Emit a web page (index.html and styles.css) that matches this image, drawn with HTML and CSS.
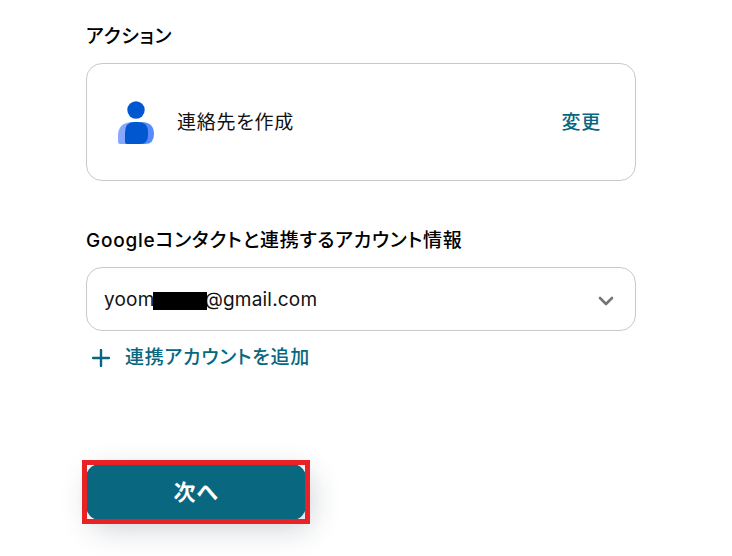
FILE: index.html
```html
<!DOCTYPE html>
<html lang="ja">
<head>
<meta charset="utf-8">
<meta name="viewport" content="width=device-width, initial-scale=1">
<title>アクション</title>
<link rel="stylesheet" href="styles.css">
</head>
<body>
<main class="form">
  <section class="group">
    <h2 class="label">アクション</h2>
    <div class="card">
      <svg class="card-icon" viewBox="0 0 38 44" aria-hidden="true">
        <circle cx="19" cy="9" r="8.7" fill="#0057d0"/>
        <path d="M16 21h6v22H3Q1 43 1 41V35Q1 21 16 21z" fill="#86a9ff"/>
        <path d="M16 21h8q13 0 13 12q0 10-9 10H16z" fill="#578cff"/>
        <path d="M17 21h4q10 0 10 10v3q0 9-8 9H10q-2 0-2-2V32q0-11 9-11z" fill="#0057d0"/>
      </svg>
      <span class="card-name">連絡先を作成</span>
      <button class="link" type="button">変更</button>
    </div>
  </section>
  <section class="group">
    <label class="label" for="account">Googleコンタクトと連携するアカウント情報</label>
    <div class="select-box">
      <select class="select" id="account">
        <option>yoom&emsp;&emsp;&ensp;&hairsp;@gmail.com</option>
      </select>
      <span class="mask"></span>
      <svg class="chevron" viewBox="0 0 16 10" aria-hidden="true">
        <path d="M2 2l6 6 6-6" fill="none" stroke="#757575" stroke-width="2.6" stroke-linecap="round" stroke-linejoin="round"/>
      </svg>
    </div>
    <button class="link add" type="button">
      <svg class="plus" viewBox="0 0 18 18" aria-hidden="true">
        <path d="M9 1v16M1 9h16" fill="none" stroke="#076780" stroke-width="2.4" stroke-linecap="round"/>
      </svg>
      連携アカウントを追加
    </button>
  </section>
  <button class="next" type="button">次へ</button>
</main>
</body>
</html>
```
FILE: styles.css
```css
* {
  box-sizing: border-box;
}

body {
  margin: 0;
  background: #fff;
  color: #111;
  font-family: Inter, "Noto Sans CJK JP", sans-serif;
  font-size: 19px;
  line-height: 28px;
  font-feature-settings: "palt";
  letter-spacing: 0.04em;
}

button,
select {
  font: inherit;
  font-feature-settings: inherit;
  letter-spacing: inherit;
  border: 0;
  padding: 0;
  background: none;
}

.form {
  padding: 23px 96px 36px 86px;
}

.group {
  margin-bottom: 46px;
}

.label {
  display: block;
  margin: 0 0 12px;
  font-size: 19px;
  font-weight: 500;
  color: #000;
}

.card {
  display: flex;
  align-items: center;
  gap: 22px;
  height: 118px;
  padding: 2px 34px 0 30px;
  border: 1px solid #c9c9c9;
  border-radius: 16px;
}

.card-icon {
  width: 38px;
  height: 44px;
}

.card-name {
  flex: 1;
}

.link {
  color: #076780;
  font-weight: 500;
  cursor: pointer;
}

.select-box {
  position: relative;
}

.select {
  display: block;
  width: 100%;
  height: 64px;
  padding: 2px 48px 0 17px;
  border: 1px solid #c9c9c9;
  border-radius: 16px;
  color: #111;
  letter-spacing: 0.01em;
  appearance: none;
}

.mask {
  position: absolute;
  left: 67px;
  top: 25px;
  width: 54px;
  height: 18px;
  background: #000;
}

.chevron {
  position: absolute;
  right: 22px;
  top: 29px;
  width: 16px;
  height: 10px;
  pointer-events: none;
}

.add {
  display: flex;
  align-items: center;
  gap: 15px;
  margin: 13px 0 0 6px;
}

.plus {
  width: 18px;
  height: 18px;
}

.next {
  position: relative;
  display: block;
  width: 220px;
  height: 56px;
  margin-top: 92px;
  border-radius: 14px;
  background: #0a6780;
  color: #fff;
  font-size: 22px;
  font-weight: 700;
  box-shadow: 5px 8px 30px rgba(20, 40, 60, 0.22);
}

.next::after {
  content: "";
  position: absolute;
  inset: -4px;
  border: 5px solid #e92226;
}
```
